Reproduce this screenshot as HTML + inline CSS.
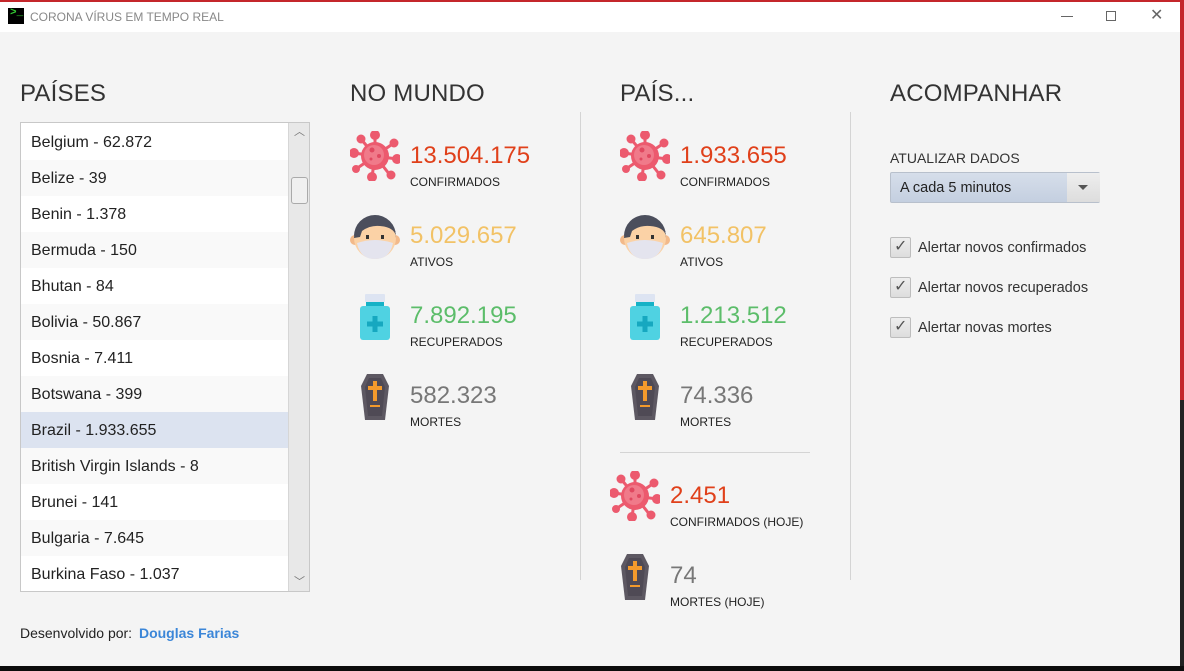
<!DOCTYPE html>
<html><head><meta charset="utf-8"><style>
*{margin:0;padding:0;box-sizing:border-box}
body{width:1184px;height:671px;overflow:hidden;background:#f4f4f4;font-family:"Liberation Sans",sans-serif;position:relative;color:#333}
.abs{position:absolute}
.tb{left:0;top:0;width:1184px;height:32px;background:#fff;border-top:2px solid #c4262b}
.h{font-size:24px;color:#333;top:80px;letter-spacing:0.2px}
.list{left:20px;top:122px;width:290px;height:470px;border:1px solid #c8c8c8;background:#fff;overflow:hidden}
.rows{padding-top:1px}
.row{height:36px;line-height:38px;padding-left:10px;font-size:16px;color:#222;width:267px}
.row:nth-child(even){background:#f9f9f9}
.row.sel{background:#dce3f0}
.num{font-size:24px;margin-top:2px}
.lab{font-size:12px;color:#222}
.ck{width:21px;height:21px;border:1px solid #bdbdbd;border-radius:2px;background:linear-gradient(#eee,#ddd)}
.ckl{font-size:14.5px;color:#333}
</style></head><body>
<svg width="0" height="0" style="position:absolute">
<defs>
<symbol id="virus" viewBox="0 0 50 50">
<g stroke="#ec5a6e" stroke-width="3" fill="#ec5a6e">
<line x1="25" y1="25" x2="25" y2="4"/><line x1="25" y1="25" x2="44" y2="12"/><line x1="25" y1="25" x2="47" y2="28"/><line x1="25" y1="25" x2="40" y2="44"/><line x1="25" y1="25" x2="22" y2="46"/><line x1="25" y1="25" x2="6" y2="38"/><line x1="25" y1="25" x2="4" y2="22"/><line x1="25" y1="25" x2="11" y2="8"/>
<circle cx="25" cy="4" r="3.5"/><circle cx="44" cy="12" r="3"/><circle cx="47" cy="28" r="3.5"/><circle cx="41" cy="44" r="3"/><circle cx="22" cy="46" r="3.5"/><circle cx="6" cy="38" r="2.5"/><circle cx="4" cy="22" r="3.5"/><circle cx="11" cy="8" r="3"/>
</g>
<circle cx="25" cy="25" r="14" fill="#ec5a6e"/><circle cx="24" cy="24" r="10" fill="#f07a8a"/>
<circle cx="22" cy="19" r="2.5" fill="#e04860"/><circle cx="29" cy="25" r="2" fill="#e04860"/><circle cx="21" cy="28" r="1.5" fill="#e04860"/>
</symbol>
<symbol id="face" viewBox="0 0 50 50">
<circle cx="5" cy="29" r="5" fill="#f2b98a"/><circle cx="45" cy="29" r="5" fill="#f2b98a"/>
<circle cx="25" cy="27" r="21" fill="#fbd2a6"/>
<path d="M4 27 A21 21 0 0 1 46 27 L46 25 Q44 16 30 15 Q20 14 12 20 L10 26 Z" fill="#4b4e5c"/>
<path d="M4 25 A21 21 0 0 1 46 25 L46 22 Q38 13 22 14 Q10 17 4 25Z" fill="#4b4e5c"/>
<rect x="16" y="24" width="3" height="4" fill="#333"/><rect x="31" y="24" width="3" height="4" fill="#333"/>
<path d="M7 32 Q25 26 43 32 Q40 48 25 48 Q10 48 7 32Z" fill="#e4e4ee"/>
</symbol>
<symbol id="bottle" viewBox="0 0 50 50">
<rect x="15" y="2" width="20" height="8" rx="1" fill="#dde4f2"/>
<rect x="16" y="10" width="18" height="4" fill="#16b2c6"/>
<rect x="10" y="14" width="30" height="34" rx="3" fill="#4fd2e2"/>
<rect x="22.5" y="24" width="5" height="16" fill="#16a8c0"/><rect x="17" y="29.5" width="16" height="5" fill="#16a8c0"/>
</symbol>
<symbol id="coffin" viewBox="0 0 50 50">
<polygon points="17,2 33,2 39,14 35,48 15,48 11,14" fill="#5d5862"/>
<polygon points="19,6 31,6 35,15 32,44 18,44 15,15" fill="#4f4a55"/>
<rect x="23" y="9" width="4" height="20" fill="#f39a2c"/><rect x="18" y="14" width="14" height="4" fill="#f39a2c"/><rect x="20" y="33" width="10" height="2" fill="#f39a2c"/>
</symbol>
</defs></svg>

<div class="abs tb"></div>
<div class="abs" style="left:8px;top:8px;width:16px;height:16px;background:#000"><span style="position:absolute;left:2px;top:-1px;color:#3c3;font-size:11px;font-weight:bold;font-family:'Liberation Mono'">&gt;_</span></div>
<div class="abs" style="left:30px;top:10px;font-size:12px;color:#888">CORONA VÍRUS EM TEMPO REAL</div>
<div class="abs" style="left:1061px;top:16px;width:12px;height:1px;background:#666"></div>
<div class="abs" style="left:1106px;top:11px;width:10px;height:10px;border:1px solid #666"></div>
<div class="abs" style="left:1150px;top:5px;font-size:16px;color:#666">✕</div>
<div class="abs" style="left:1180px;top:0;width:4px;height:400px;background:#c4262b"></div>
<div class="abs" style="left:1180px;top:400px;width:4px;height:271px;background:#222"></div>
<div class="abs" style="left:0;top:666px;width:1184px;height:5px;background:#0c0c0c"></div>

<div class="abs h" style="left:20px">PAÍSES</div>
<div class="abs h" style="left:350px">NO MUNDO</div>
<div class="abs h" style="left:620px">PAÍS...</div>
<div class="abs h" style="left:890px">ACOMPANHAR</div>

<div class="abs list"><div class="rows">
<div class="row">Belgium - 62.872</div><div class="row">Belize - 39</div><div class="row">Benin - 1.378</div><div class="row">Bermuda - 150</div><div class="row">Bhutan - 84</div><div class="row">Bolivia - 50.867</div><div class="row">Bosnia - 7.411</div><div class="row">Botswana - 399</div><div class="row sel">Brazil - 1.933.655</div><div class="row">British Virgin Islands - 8</div><div class="row">Brunei - 141</div><div class="row">Bulgaria - 7.645</div><div class="row">Burkina Faso - 1.037</div></div>
<div class="abs" style="left:267px;top:0;width:21px;height:468px;background:#e8e8e8;border-left:1px solid #d6d6d6"></div>
<div class="abs" style="left:273px;top:0;font-size:11px;color:#777">︿</div>
<div class="abs" style="left:270px;top:54px;width:17px;height:27px;border:1px solid #aaa;border-radius:3px;background:#f0f0f0"></div>
<div class="abs" style="left:273px;top:450px;font-size:11px;color:#777">﹀</div>
</div>

<!-- world -->
<svg class="abs" style="left:350px;top:131px" width="50" height="50"><use href="#virus"/></svg>
<div class="abs num" style="left:410px;top:140px;color:#e0401a">13.504.175</div>
<div class="abs lab" style="left:410px;top:175px">CONFIRMADOS</div>
<svg class="abs" style="left:350px;top:210px" width="50" height="52"><use href="#face"/></svg>
<div class="abs num" style="left:410px;top:220px;color:#f2c266">5.029.657</div>
<div class="abs lab" style="left:410px;top:255px">ATIVOS</div>
<svg class="abs" style="left:350px;top:290px" width="50" height="54"><use href="#bottle"/></svg>
<div class="abs num" style="left:410px;top:300px;color:#5cbd6a">7.892.195</div>
<div class="abs lab" style="left:410px;top:335px">RECUPERADOS</div>
<svg class="abs" style="left:350px;top:370px" width="50" height="54"><use href="#coffin"/></svg>
<div class="abs num" style="left:410px;top:380px;color:#777">582.323</div>
<div class="abs lab" style="left:410px;top:415px">MORTES</div>

<div class="abs" style="left:580px;top:112px;width:1px;height:468px;background:#d4d4d4"></div>
<div class="abs" style="left:850px;top:112px;width:1px;height:468px;background:#d4d4d4"></div>

<!-- country -->
<svg class="abs" style="left:620px;top:131px" width="50" height="50"><use href="#virus"/></svg>
<div class="abs num" style="left:680px;top:140px;color:#e0401a">1.933.655</div>
<div class="abs lab" style="left:680px;top:175px">CONFIRMADOS</div>
<svg class="abs" style="left:620px;top:210px" width="50" height="52"><use href="#face"/></svg>
<div class="abs num" style="left:680px;top:220px;color:#f2c266">645.807</div>
<div class="abs lab" style="left:680px;top:255px">ATIVOS</div>
<svg class="abs" style="left:620px;top:290px" width="50" height="54"><use href="#bottle"/></svg>
<div class="abs num" style="left:680px;top:300px;color:#5cbd6a">1.213.512</div>
<div class="abs lab" style="left:680px;top:335px">RECUPERADOS</div>
<svg class="abs" style="left:620px;top:370px" width="50" height="54"><use href="#coffin"/></svg>
<div class="abs num" style="left:680px;top:380px;color:#777">74.336</div>
<div class="abs lab" style="left:680px;top:415px">MORTES</div>
<div class="abs" style="left:620px;top:452px;width:190px;height:1px;background:#d4d4d4"></div>
<svg class="abs" style="left:610px;top:471px" width="50" height="50"><use href="#virus"/></svg>
<div class="abs num" style="left:670px;top:480px;color:#e0401a">2.451</div>
<div class="abs lab" style="left:670px;top:515px">CONFIRMADOS (HOJE)</div>
<svg class="abs" style="left:610px;top:550px" width="50" height="54"><use href="#coffin"/></svg>
<div class="abs num" style="left:670px;top:560px;color:#777">74</div>
<div class="abs lab" style="left:670px;top:595px">MORTES (HOJE)</div>

<!-- follow -->
<div class="abs" style="left:890px;top:150px;font-size:14px;color:#333">ATUALIZAR DADOS</div>
<div class="abs" style="left:890px;top:172px;width:210px;height:31px;border:1px solid #b8c0cc;border-radius:2px;background:linear-gradient(#d6deea,#c4cfe0)">
<div class="abs" style="left:9px;top:7px;font-size:14.5px;color:#222">A cada 5 minutos</div>
<div class="abs" style="left:176px;top:0;width:33px;height:29px;background:linear-gradient(#eee,#ddd)"></div>
<div class="abs" style="left:187px;top:12px;border-left:5px solid transparent;border-right:5px solid transparent;border-top:5px solid #555"></div>
</div>
<div class="abs ck" style="left:890px;top:237px"></div><div class="abs" style="left:894px;top:236px;color:#555;font-size:16px">✓</div>
<div class="abs ckl" style="left:918px;top:240px">Alertar novos confirmados</div>
<div class="abs ck" style="left:890px;top:277px"></div><div class="abs" style="left:894px;top:276px;color:#555;font-size:16px">✓</div>
<div class="abs ckl" style="left:918px;top:280px">Alertar novos recuperados</div>
<div class="abs ck" style="left:890px;top:317px"></div><div class="abs" style="left:894px;top:316px;color:#555;font-size:16px">✓</div>
<div class="abs ckl" style="left:918px;top:320px">Alertar novas mortes</div>

<div class="abs" style="left:20px;top:625px;font-size:14px;color:#222">Desenvolvido por: <b style="color:#3b86d8;margin-left:3px">Douglas Farias</b></div>
</body></html>
